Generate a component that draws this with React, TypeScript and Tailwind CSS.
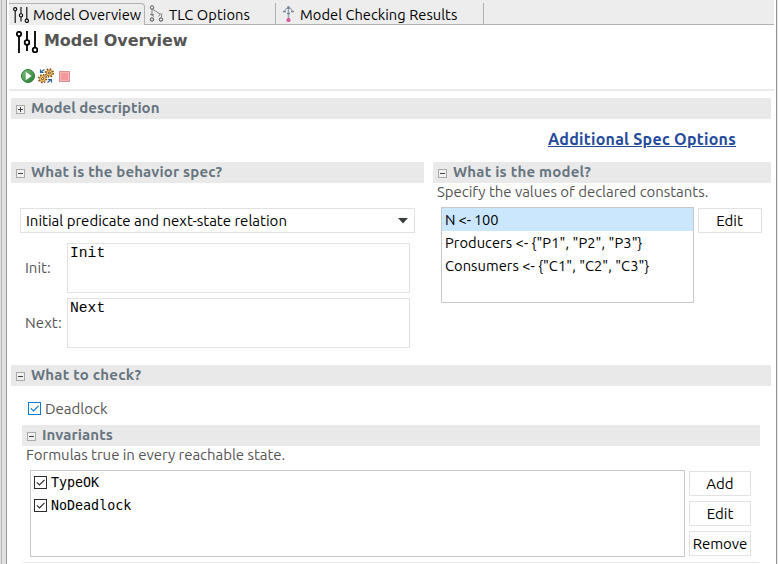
import React from "react";

const UI = "font-['Ubuntu','Noto_Sans',sans-serif]";

function T({ c = "", children }: { c?: string; children: React.ReactNode }) {
  return <span className={`block whitespace-pre leading-5 ${c}`}>{children}</span>;
}

function Sliders({ c, s = 1 }: { c: string; s?: number }) {
  return (
    <svg className={c} viewBox="0 0 22 22" fill="none" stroke="#000" strokeWidth={s}>
      <path d="M3 5.500v16.500M11 0v9M11 14v6M19 0v16.500" />
      <circle cx="3" cy="3" r="2.200" />
      <circle cx="11" cy="11.500" r="2.300" />
      <circle cx="19" cy="19" r="2.300" />
    </svg>
  );
}

function TreeIcon() {
  return (
    <svg className="h-[17px] w-4 shrink-0" viewBox="0 0 16 17" fill="none" stroke="#858585">
      <path d="M3 4v7M4 4.500l7 4.500M12.500 10v2M3.500 10.500l1.500 1" />
      <circle cx="3" cy="2.500" r="1.700" stroke="#555" />
      <path d="M1 9.500h4M2.500 8.500L4.500 11.500" />
      <circle cx="3" cy="14.500" r="1.700" stroke="#444" />
      <circle cx="12" cy="14.500" r="1.700" stroke="#444" />
      <path d="M10 9h3.500M9.500 11.500l1.500-2" />
    </svg>
  );
}

function ResultIcon() {
  return (
    <svg className="mt-px h-4 w-[11px] shrink-0" viewBox="0 0 11 16" fill="none" stroke="#9aa5b1">
      <path d="M5.500 1v12" strokeWidth="1.500" />
      <path d="M1.500 5.500l1.500-3h5l1.500 3" />
      <circle cx="5.500" cy="1.500" r="1.500" fill="#77879a" stroke="none" />
      <path d="M0 5.500h3M8 5.500h3M4 7.500h3" stroke="#77879a" strokeWidth="1.500" />
      <circle cx="5.500" cy="14" r="2.100" fill="#d8589b" stroke="none" />
    </svg>
  );
}

function Gear({ x, y }: { x: number; y: number }) {
  return (
    <g transform={`translate(${x} ${y})`}>
      <circle r="3.900" stroke="#7a4310" strokeWidth="1.600" strokeDasharray="1.500 1.563" />
      <circle r="3" fill="#ffd77a" stroke="#b8741c" strokeWidth="1" />
      <circle r="1.100" fill="#fff" stroke="#5a3210" strokeWidth=".9" />
    </g>
  );
}

function Toolbar() {
  return (
    <div className="flex h-4 items-center pl-[11px]">
      <svg className="h-4 w-4" viewBox="0 0 16 16">
        <defs>
          <linearGradient id="run" x1="0" y1="0" x2="1" y2="1">
            <stop offset="0" stopColor="#7fc27b" />
            <stop offset="1" stopColor="#1f7a2e" />
          </linearGradient>
        </defs>
        <circle cx="8" cy="8" r="6.500" fill="url(#run)" stroke="#2d7a3a" />
        <path d="M5.700 3.700l6 4.300-6 4.300z" fill="#fff" />
      </svg>
      <svg className="ml-0.5 h-4 w-4" viewBox="0 0 16 16" fill="none">
        <Gear x={11.3} y={5} />
        <Gear x={4.6} y={10.7} />
        <path d="M6.500 1.500L3 4M2.500 1.500v3h3M9.500 14.500l3.500-3M10 11.500h3.500v3" stroke="#24649c" strokeWidth="1.200" />
      </svg>
      <div className="ml-[5px] h-[11px] w-[11px] border border-[#d9908f] bg-[#f8b4b6] p-px">
        <div className="h-full bg-[#f3989d]" />
      </div>
    </div>
  );
}

function Toggle({ open }: { open: boolean }) {
  return (
    <svg className="mt-[7px] h-[9px] w-[9px] shrink-0" viewBox="0 0 9 9" shapeRendering="crispEdges">
      <rect x=".5" y=".5" width="8" height="8" fill="#f1f1f1" stroke="#a9a9a9" />
      <path d={open ? "M2 4.500h5" : "M2 4.500h5M4.500 2v5"} stroke="#444" />
    </svg>
  );
}

function Bar({ c = "", t = "", open = true, children }: { c?: string; t?: string; open?: boolean; children: string }) {
  return (
    <div className={`flex h-[21px] shrink-0 rounded-t-[1px] bg-[#e9e9e9] pl-[5px] ${c}`}>
      <Toggle open={open} />
      <T c={`ml-[6px] text-[15px] font-bold text-[#677580] ${t}`}>{children}</T>
    </div>
  );
}

function Button({ c = "", children }: { c?: string; children: string }) {
  return (
    <button className={`flex h-[25px] justify-center border border-[#e2e2e2] bg-white pt-[2px] text-[15px] leading-5 text-black ${c}`}>
      {children}
    </button>
  );
}

function Check({ blue = false }: { blue?: boolean }) {
  const s = blue ? "#0c7bd2" : "#2b2b2b";
  return (
    <svg className="h-[13px] w-[13px] shrink-0" viewBox="0 0 13 13" fill="none" stroke={s}>
      <rect x=".5" y=".5" width="12" height="12" fill="#fff" />
      <path d="M2.800 6.300l2.700 2.700 5-5.200" strokeWidth="1.200" />
    </svg>
  );
}

const MONO = "font-['Liberation_Mono',monospace] text-[14.667px] leading-[18px]";
const ITEM = "h-[23px] pl-[3px] pt-[2px] text-[14.667px] tracking-[0.06px]";

export default function App() {
  return (
    <div className={`flex h-[564px] w-[778px] overflow-hidden bg-white text-black ${UI}`}>
      <div className="w-[7px] shrink-0 border-r border-[#969696] bg-[#e1e1e1] pl-px">
        <div className="h-full w-px bg-[#b4b4b4]" />
      </div>
      <main className="flex w-[769px] shrink-0 flex-col pl-[2px]">
        <nav className="flex h-[25px] w-[765px] shrink-0 bg-[#ededed] pt-[3px]">
          <div className="flex w-[136px] shrink-0 rounded-tr-[4px] border-r border-t border-[#b2b2b2] pl-1 pt-px">
            <Sliders c="mt-[2px] h-[16px] w-[16px] shrink-0" s={1.5} />
            <T c="ml-1 text-[14.667px] tracking-[0.03px]">Model Overview</T>
          </div>
          <div className="flex w-[131px] shrink-0 border-b border-r border-[#b2b2b2] pl-1 pt-[2px]">
            <TreeIcon />
            <T c="ml-1 text-[14.667px] tracking-[0.08px]">TLC Options</T>
          </div>
          <div className="flex w-[208px] shrink-0 border-b border-r border-[#b2b2b2] pl-[7px] pt-[2px]">
            <ResultIcon />
            <T c="ml-[6px] text-[14.667px] tracking-[0.04px]">Model Checking Results</T>
          </div>
          <div className="grow border-b border-[#b2b2b2]" />
        </nav>
        <header className="h-[73px] w-[765px] shrink-0">
          <div className="flex h-[43px] pl-[7px] pt-[6px]">
            <Sliders c="h-[22px] w-[22px]" s={1.8} />
            <T c="ml-[6px] font-['DejaVu_Sans',sans-serif] text-[16px] font-bold tracking-[-0.08px] text-[#555]">Model Overview</T>
          </div>
          <Toolbar />
          <div className="mt-[5px] h-[2px] bg-[#e9e9e9]" />
        </header>
        <Bar c="ml-[2px] w-[760px]" t="tracking-[0.03px]" open={false}>Model description</Bar>
        <div className="flex h-[43px] shrink-0 pl-[539px] pt-[10px]">
          <T c="h-5 text-[16px] font-bold tracking-[0.26px] text-[#244a9c] underline">Additional Spec Options</T>
        </div>
        <div className="ml-[2px] flex h-[203px] w-[760px] shrink-0 justify-between">
          <section className="w-[413px]">
            <Bar t="tracking-[0.16px]">What is the behavior spec?</Bar>
            <div className="ml-[9px] mt-[25px] flex h-[25px] w-[395px] items-start justify-between border border-[#e2e2e2] pl-[5px] pr-[6px] pt-[2px]">
              <T c="text-[15px]">Initial predicate and next-state relation</T>
              <svg className="mt-[7px] h-[6px] w-[10px]" viewBox="0 0 10 6"><path d="M0 0h10L5 5.500z" fill="#3c403d" /></svg>
            </div>
            <div className="ml-[14px] mt-[10px] flex h-[50px]">
              <T c="w-[42px] pt-[15px] text-[15px] text-[#555]">Init:</T>
              <div className="w-[343px] border border-[#e2e2e2] pl-[2px]"><T c={MONO}>Init</T></div>
            </div>
            <div className="ml-[14px] mt-[5px] flex h-[50px]">
              <T c="w-[42px] pt-[15px] text-[15px] tracking-[0.1px] text-[#555]">Next:</T>
              <div className="w-[343px] border border-[#e2e2e2] pl-[2px]"><T c={MONO}>Next</T></div>
            </div>
          </section>
          <section className="w-[338px]">
            <Bar t="tracking-[0.23px]">What is the model?</Bar>
            <T c="ml-1 -mt-px text-[15px] tracking-[-0.04px] text-[#555]">Specify the values of declared constants.</T>
            <div className="ml-2 mt-[5px] flex">
              <div className="h-[96px] w-[253px] border border-[#c8c8c8]">
                <T c="h-[23px] bg-[#cbe7fe] pl-[3px] pt-[2px] text-[14.667px] tracking-[-0.15px]">{"N <- 100"}</T>
                <T c={ITEM}>{'Producers <- {"P1", "P2", "P3"}'}</T>
                <T c={ITEM}>{'Consumers <- {"C1", "C2", "C3"}'}</T>
              </div>
              <Button c="ml-1 mt-px w-[64px] pr-px">Edit</Button>
            </div>
          </section>
        </div>
        <Bar c="ml-[2px] w-[760px]" t="tracking-[0.23px]">What to check?</Bar>
        <div className="flex h-[39px] shrink-0 items-start pl-[19px] pt-[13px]">
          <div className="pt-[3px]"><Check blue /></div>
          <T c="ml-1 text-[15px] text-[#555]">Deadlock</T>
        </div>
        <section className="ml-[13px] w-[738px]">
          <Bar t="tracking-[0.1px]">Invariants</Bar>
          <T c="ml-1 -mt-px text-[15px] tracking-[-0.04px] text-[#555]">Formulas true in every reachable state.</T>
          <div className="ml-2 mt-[5px] flex">
            <div className="h-[87px] w-[655px] border border-[#c8c8c8] pl-[3px]">
              {["TypeOK", "NoDeadlock"].map((n) => (
                <div key={n} className="flex h-[23px] items-center">
                  <Check />
                  <T c="ml-1 font-['DejaVu_Sans_Mono',monospace] text-[13.33px]">{n}</T>
                </div>
              ))}
            </div>
            <div className="ml-1 mt-px flex flex-col gap-[5px]">
              <Button c="w-[62px]">Add</Button>
              <Button c="w-[62px]">Edit</Button>
              <Button c="w-[62px] tracking-[-0.1px]">Remove</Button>
            </div>
          </div>
          <div className="ml-px mt-[5px] h-px w-[736px] bg-[#e9e9e9]" />
        </section>
      </main>
      <div className="w-[2px] shrink-0 border-l border-[#969696] bg-[#e6e6e6]" />
    </div>
  );
}
